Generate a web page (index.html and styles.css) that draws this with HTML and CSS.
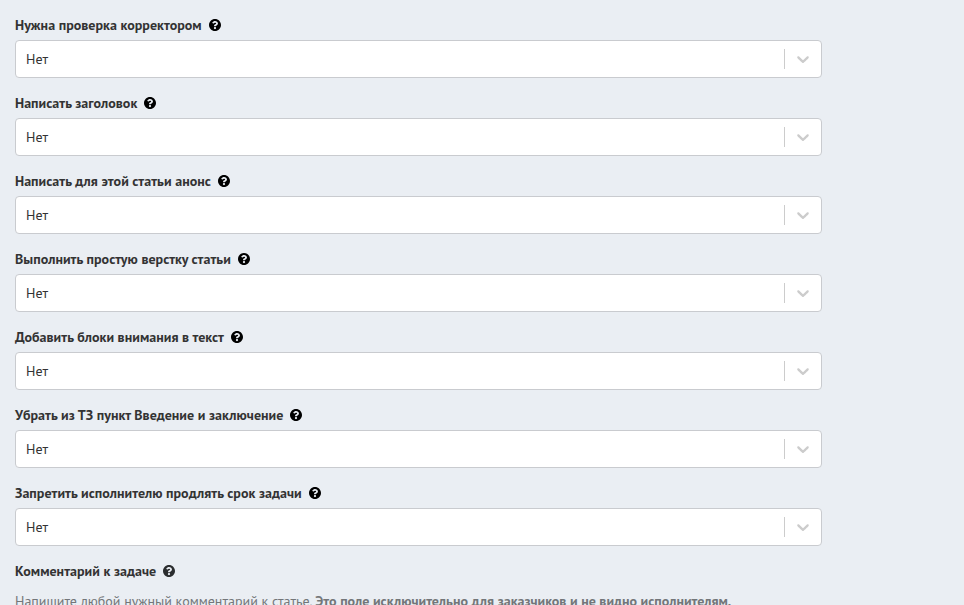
FILE: index.html
```
<!DOCTYPE html>
<html lang="ru">
<head>
<meta charset="utf-8">
<title>Параметры задачи</title>
<link rel="stylesheet" href="styles.css">
</head>
<body>
<svg class="defs" aria-hidden="true">
  <symbol id="help" viewBox="8 8 496 496"><path d="M504 256c0 136.997-111.043 248-248 248S8 392.997 8 256C8 119.083 119.043 8 256 8s248 111.083 248 248zM262.655 90c-54.497 0-89.255 22.957-116.549 63.758-3.536 5.286-2.353 12.415 2.715 16.258l34.699 26.31c5.205 3.947 12.621 3.008 16.665-2.122 17.864-22.658 30.113-35.797 57.303-35.797 20.429 0 45.698 13.148 45.698 32.958 0 14.976-12.363 22.667-32.534 33.976C247.128 238.528 216 254.941 216 296v4c0 6.627 5.373 12 12 12h56c6.627 0 12-5.373 12-12v-1.333c0-28.462 83.186-29.647 83.186-106.667 0-58.002-60.165-102-116.531-102zM256 338c-25.365 0-46 20.635-46 46 0 25.364 20.635 46 46 46s46-20.636 46-46c0-25.365-20.635-46-46-46z"/></symbol>
  <symbol id="chevron" viewBox="0 0 20 20"><path d="M4.516 7.548c0.436-0.446 1.043-0.481 1.576 0l3.908 3.747 3.908-3.747c0.533-0.481 1.141-0.446 1.574 0 0.436 0.445 0.408 1.197 0 1.615-0.406 0.418-4.695 4.502-4.695 4.502-0.217 0.223-0.502 0.335-0.787 0.335s-0.57-0.112-0.789-0.335c0 0-4.287-4.084-4.695-4.502s-0.436-1.17 0-1.615z"/></symbol>
</svg>
<main class="form">
  <div class="field">
    <div class="label"><span>Нужна проверка корректором</span><svg class="help"><use href="#help"/></svg></div>
    <div class="select"><span class="value">Нет</span><span class="separator"></span><svg class="chevron"><use href="#chevron"/></svg></div>
  </div>
  <div class="field">
    <div class="label"><span>Написать заголовок</span><svg class="help"><use href="#help"/></svg></div>
    <div class="select"><span class="value">Нет</span><span class="separator"></span><svg class="chevron"><use href="#chevron"/></svg></div>
  </div>
  <div class="field">
    <div class="label"><span>Написать для этой статьи анонс</span><svg class="help"><use href="#help"/></svg></div>
    <div class="select"><span class="value">Нет</span><span class="separator"></span><svg class="chevron"><use href="#chevron"/></svg></div>
  </div>
  <div class="field">
    <div class="label"><span>Выполнить простую верстку статьи</span><svg class="help"><use href="#help"/></svg></div>
    <div class="select"><span class="value">Нет</span><span class="separator"></span><svg class="chevron"><use href="#chevron"/></svg></div>
  </div>
  <div class="field">
    <div class="label"><span>Добавить блоки внимания в текст</span><svg class="help"><use href="#help"/></svg></div>
    <div class="select"><span class="value">Нет</span><span class="separator"></span><svg class="chevron"><use href="#chevron"/></svg></div>
  </div>
  <div class="field">
    <div class="label"><span>Убрать из ТЗ пункт Введение и заключение</span><svg class="help"><use href="#help"/></svg></div>
    <div class="select"><span class="value">Нет</span><span class="separator"></span><svg class="chevron"><use href="#chevron"/></svg></div>
  </div>
  <div class="field">
    <div class="label"><span>Запретить исполнителю продлять срок задачи</span><svg class="help"><use href="#help"/></svg></div>
    <div class="select"><span class="value">Нет</span><span class="separator"></span><svg class="chevron"><use href="#chevron"/></svg></div>
  </div>
  <div class="field">
    <div class="label"><span>Комментарий к задаче</span><svg class="help muted"><use href="#help"/></svg></div>
    <p class="hint">Напишите любой нужный комментарий к статье. <b>Это поле исключительно для заказчиков и не видно исполнителям.</b></p>
  </div>
</main>
</body>
</html>
```
FILE: styles.css
```
* { box-sizing: border-box; }
html, body { height: 100%; }
body {
  margin: 0;
  overflow: hidden;
  background: #eaeef3;
  color: #333;
  font: 14px/20px "PT Sans", "Open Sans", "Noto Sans", sans-serif;
}
.defs { display: none; }
.form { width: 822px; padding: 15px 0 0 15px; }
.field { margin-bottom: 15px; }
.label {
  display: flex;
  align-items: center;
  gap: 7px;
  height: 20px;
  margin-bottom: 5px;
  font-weight: 700;
  letter-spacing: 0.025px;
  white-space: nowrap;
}
.help { width: 12px; height: 12px; fill: #000; }
.help.muted { fill: #2b2d2f; }
.select {
  display: flex;
  align-items: center;
  height: 38px;
  padding-left: 10px;
  background: #fff;
  border: 1px solid #c9cbcf;
  border-radius: 4px;
}
.value { flex: 1; }
.separator { width: 1px; margin: 8px 0; align-self: stretch; background: #ccc; }
.chevron { width: 20px; height: 20px; margin: 0 8px; fill: #ccc; }
.hint { margin: 10px 0 0; color: #737679; white-space: nowrap; }
```
